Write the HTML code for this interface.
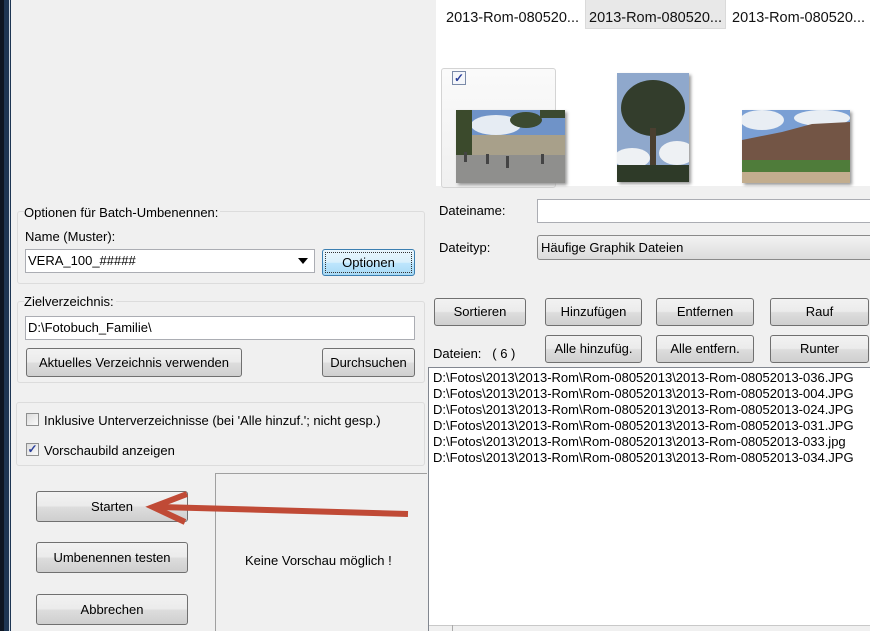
<!DOCTYPE html>
<html><head><meta charset="utf-8"><style>
*{margin:0;padding:0;box-sizing:border-box}
html,body{width:870px;height:631px;overflow:hidden}
body{background:#f0f0f0;font-family:"Liberation Sans",Arial,sans-serif;font-size:13px;color:#000;position:relative}
.a{position:absolute}
.btn{position:absolute;border:1px solid #707070;border-radius:3px;background:linear-gradient(#f2f2f2 0%,#ebebeb 48%,#dddddd 52%,#cfcfcf 100%);text-align:center;font-size:13px}
.grp{position:absolute;border:1px solid #dcdcdc;border-radius:3px;background:#f0f0f0}
.inp{position:absolute;background:#fff;border:1px solid #abadb3}
.t{position:absolute;white-space:nowrap}
.cb{position:absolute;width:13px;height:13px;border:1px solid #8e8f8f;background:linear-gradient(135deg,#dcdcdc,#fafafa)}
</style></head><body>
<div class="a" style="left:0;top:0;width:4px;height:631px;background:#0d1522"></div>
<div class="a" style="left:4px;top:0;width:5px;height:631px;background:#1d3553"></div>
<div class="a" style="left:9px;top:0;width:1px;height:631px;background:#c8d4e0"></div>
<div class="a" style="left:10px;top:0;width:1px;height:631px;background:#1d3553"></div>

<div class="a" style="left:436px;top:0;width:434px;height:186px;background:#fff"></div>
<div class="a" style="left:585px;top:0;width:141px;height:29px;background:#e8e8e8;border:1px solid #dadada;border-top:none"></div>
<div class="t" style="left:446px;top:10px;font-size:14.5px;color:#111">2013-Rom-080520...</div>
<div class="t" style="left:589px;top:10px;font-size:14.5px;color:#111">2013-Rom-080520...</div>
<div class="t" style="left:732px;top:10px;font-size:14.5px;color:#111">2013-Rom-080520...</div>
<div class="a" style="left:441px;top:68px;width:115px;height:120px;border:1px solid #d4d4d4;border-radius:3px;background:linear-gradient(#fafafa,#f0f0f0)"></div>
<div class="a" style="left:452px;top:71px;width:14px;height:14px;border:1px solid #7a8aa8;background:#f4f6fa;color:#2a3f9a;font-size:12px;line-height:12px;text-align:center;font-weight:bold">✓</div>

<svg class="a" style="left:456px;top:110px;box-shadow:2px 2px 3px #999" width="109" height="73">
<rect width="109" height="73" fill="#8c8c8a"/>
<rect width="109" height="38" fill="#6f93c8"/>
<ellipse cx="40" cy="15" rx="25" ry="10" fill="#e6ecf3"/>
<rect x="0" y="25" width="109" height="20" fill="#a8a08a"/>
<rect x="0" y="0" width="16" height="45" fill="#3b4a2c"/>
<ellipse cx="70" cy="10" rx="16" ry="8" fill="#3c4a30"/>
<rect x="84" y="0" width="25" height="8" fill="#3c4a30"/>
<rect x="0" y="45" width="109" height="28" fill="#8f8f8d"/>
<g fill="#444"><rect x="8" y="42" width="3" height="10"/><rect x="30" y="44" width="3" height="10"/><rect x="50" y="46" width="3" height="12"/><rect x="85" y="44" width="3" height="10"/></g>
</svg>
<svg class="a" style="left:617px;top:73px;box-shadow:2px 2px 3px #999" width="72" height="109">
<rect width="72" height="109" fill="#8fa8cc"/>
<ellipse cx="60" cy="80" rx="18" ry="12" fill="#eef1f4"/>
<ellipse cx="15" cy="85" rx="18" ry="10" fill="#eef1f4"/>
<ellipse cx="36" cy="35" rx="32" ry="28" fill="#333d2c"/>
<rect x="33" y="55" width="6" height="54" fill="#4a3f30"/>
<rect x="0" y="92" width="72" height="17" fill="#2e3a28"/>
</svg>
<svg class="a" style="left:742px;top:110px;box-shadow:2px 2px 3px #999" width="108" height="73">
<rect width="108" height="73" fill="#7a9fd4"/>
<ellipse cx="20" cy="10" rx="22" ry="10" fill="#e9eef4"/>
<ellipse cx="80" cy="8" rx="28" ry="8" fill="#e9eef4"/>
<polygon points="0,30 40,22 70,14 108,12 108,55 0,55" fill="#735545"/>
<rect x="0" y="50" width="108" height="12" fill="#4f7c3a"/>
<rect x="0" y="62" width="108" height="11" fill="#c2ad8e"/>
</svg>

<div class="t" style="left:439px;top:203px">Dateiname:</div>
<div class="inp" style="left:537px;top:199px;width:340px;height:24px"></div>
<div class="t" style="left:439px;top:240px">Dateityp:</div>
<div class="a" style="left:537px;top:235px;width:340px;height:25px;border:1px solid #8a8a8a;border-radius:3px;background:linear-gradient(#f2f2f2,#dcdcdc)"></div>
<div class="t" style="left:541px;top:240px">Häufige Graphik Dateien</div>
<div class="btn" style="left:434px;top:298px;width:92px;height:28px;line-height:26px">Sortieren</div>
<div class="btn" style="left:545px;top:298px;width:97px;height:28px;line-height:26px">Hinzufügen</div>
<div class="btn" style="left:656px;top:298px;width:98px;height:28px;line-height:26px">Entfernen</div>
<div class="btn" style="left:770px;top:298px;width:99px;height:28px;line-height:26px">Rauf</div>
<div class="btn" style="left:545px;top:335px;width:97px;height:28px;line-height:26px">Alle hinzufüg.</div>
<div class="btn" style="left:656px;top:335px;width:98px;height:28px;line-height:26px">Alle entfern.</div>
<div class="btn" style="left:770px;top:335px;width:99px;height:28px;line-height:26px">Runter</div>
<div class="t" style="left:433px;top:346px">Dateien:&nbsp;&nbsp; ( 6 )</div>
<div class="a" style="left:428px;top:367px;width:445px;height:270px;background:#fff;border:1px solid #828790"></div>
<div class="t" style="left:433px;top:370px;line-height:16px">D:\Fotos\2013\2013-Rom\Rom-08052013\2013-Rom-08052013-036.JPG<br>D:\Fotos\2013\2013-Rom\Rom-08052013\2013-Rom-08052013-004.JPG<br>D:\Fotos\2013\2013-Rom\Rom-08052013\2013-Rom-08052013-024.JPG<br>D:\Fotos\2013\2013-Rom\Rom-08052013\2013-Rom-08052013-031.JPG<br>D:\Fotos\2013\2013-Rom\Rom-08052013\2013-Rom-08052013-033.jpg<br>D:\Fotos\2013\2013-Rom\Rom-08052013\2013-Rom-08052013-034.JPG</div>
<div class="a" style="left:429px;top:625px;width:441px;height:6px;background:#f0f0f0;border-top:1px solid #c8c8c8"></div>
<div class="a" style="left:452px;top:625px;width:1px;height:6px;background:#aaa"></div>

<div class="grp" style="left:17px;top:211px;width:408px;height:73px"></div>
<div class="t" style="left:24px;top:205px;background:#f0f0f0;padding-right:2px">Optionen für Batch-Umbenennen:</div>
<div class="t" style="left:25px;top:229px">Name (Muster):</div>
<div class="inp" style="left:25px;top:249px;width:290px;height:24px"></div>
<div class="t" style="left:28px;top:253px">VERA_100_#####</div>
<div class="a" style="left:298px;top:258px;width:0;height:0;border-left:5px solid transparent;border-right:5px solid transparent;border-top:6px solid #000"></div>
<div class="btn" style="left:322px;top:249px;width:93px;height:27px;line-height:25px;border:1px solid #3c7fb1;background:linear-gradient(#eaf6fd,#d9f0fc 50%,#bee6fd 52%,#a7d9f5)"><div class="a" style="left:2px;top:2px;right:2px;bottom:2px;border:1px dotted #333"></div>Optionen</div>

<div class="grp" style="left:17px;top:301px;width:408px;height:82px"></div>
<div class="t" style="left:24px;top:294px;background:#f0f0f0;padding-right:2px">Zielverzeichnis:</div>
<div class="inp" style="left:25px;top:316px;width:390px;height:24px"></div>
<div class="t" style="left:28px;top:320px">D:\Fotobuch_Familie\</div>
<div class="btn" style="left:26px;top:348px;width:216px;height:29px;line-height:27px">Aktuelles Verzeichnis verwenden</div>
<div class="btn" style="left:322px;top:348px;width:93px;height:29px;line-height:27px">Durchsuchen</div>

<div class="grp" style="left:16px;top:402px;width:409px;height:64px"></div>
<div class="cb" style="left:26px;top:413px"></div>
<div class="t" style="left:44px;top:413px">Inklusive Unterverzeichnisse (bei 'Alle hinzuf.'; nicht gesp.)</div>
<div class="cb" style="left:26px;top:443px;color:#2a3f9a;font-size:12px;line-height:11px;text-align:center;font-weight:bold">✓</div>
<div class="t" style="left:44px;top:443px">Vorschaubild anzeigen</div>

<div class="a" style="left:215px;top:473px;width:212px;height:160px;border:1px solid #a0a0a0;border-right:none;border-bottom:none"></div>
<div class="t" style="left:245px;top:553px">Keine Vorschau möglich !</div>
<div class="btn" style="left:36px;top:491px;width:152px;height:31px;line-height:29px">Starten</div>
<div class="btn" style="left:36px;top:542px;width:152px;height:31px;line-height:29px">Umbenennen testen</div>
<div class="btn" style="left:36px;top:594px;width:152px;height:31px;line-height:29px">Abbrechen</div>

<svg class="a" style="left:0;top:0" width="870" height="631">
<line x1="408" y1="514" x2="160" y2="507" stroke="#c04a36" stroke-width="6"/>
<polyline points="187,494 153,507 185,522" fill="none" stroke="#c04a36" stroke-width="6" stroke-linejoin="miter"/>
</svg>
</body></html>
